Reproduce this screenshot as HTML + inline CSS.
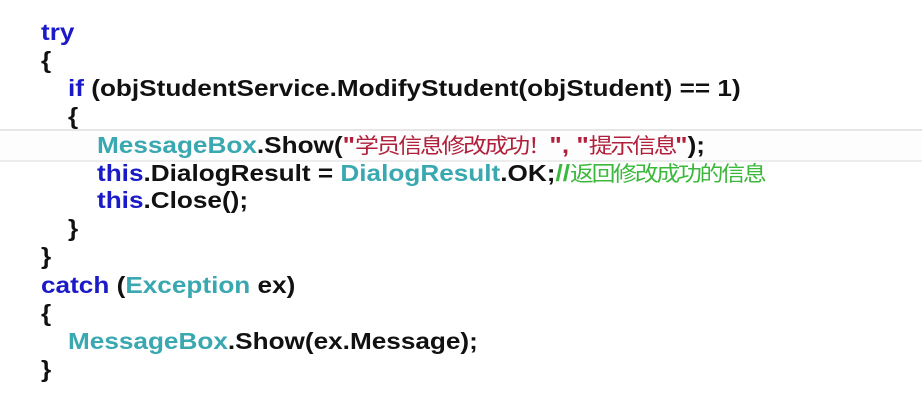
<!DOCTYPE html>
<html><head><meta charset="utf-8"><style>
html,body{margin:0;padding:0;background:#fff;width:922px;height:400px;overflow:hidden}
.c{position:absolute;left:0;top:0;font-family:"Liberation Sans","Noto Sans CJK SC",sans-serif;font-weight:bold;font-size:23px;color:#111;}
.l{position:absolute;white-space:pre;line-height:28px;height:28px;transform:scaleX(1.137);transform-origin:0 50%}
.k{color:#1a1ac8}.t{color:#3aa8b0}.s{color:#b0203a}.g{color:#3cb83c}
.cj{font-weight:normal;font-size:21px;letter-spacing:-2px}
.hl{position:absolute;left:0;top:129px;width:922px;height:29px;border-top:2px solid #e6e6e6;border-bottom:2px solid #ececec;background:#fdfdfd}
</style></head><body>
<div class="hl"></div>
<div class="c">
<div class="l" style="left:41px;top:18px"><span class="k">try</span></div>
<div class="l" style="left:41px;top:46px">{</div>
<div class="l" style="left:68px;top:74px"><span class="k">if</span> (objStudentService.ModifyStudent(objStudent) == 1)</div>
<div class="l" style="left:68px;top:102px">{</div>
<div class="l" style="left:97px;top:131px"><span class="t">MessageBox</span>.Show(<span class="s">"<span class="cj">学员信息修改成功！</span>", "<span class="cj">提示信息</span>"</span>);</div>
<div class="l" style="left:97px;top:159px"><span class="k">this</span>.DialogResult = <span class="t">DialogResult</span>.OK;<span class="g">//<span class="cj">返回修改成功的信息</span></span></div>
<div class="l" style="left:97px;top:186px"><span class="k">this</span>.Close();</div>
<div class="l" style="left:68px;top:214px">}</div>
<div class="l" style="left:41px;top:242px">}</div>
<div class="l" style="left:41px;top:271px"><span class="k">catch</span> (<span class="t">Exception</span> ex)</div>
<div class="l" style="left:41px;top:299px">{</div>
<div class="l" style="left:68px;top:327px"><span class="t">MessageBox</span>.Show(ex.Message);</div>
<div class="l" style="left:41px;top:355px">}</div>
</div>
</body></html>
